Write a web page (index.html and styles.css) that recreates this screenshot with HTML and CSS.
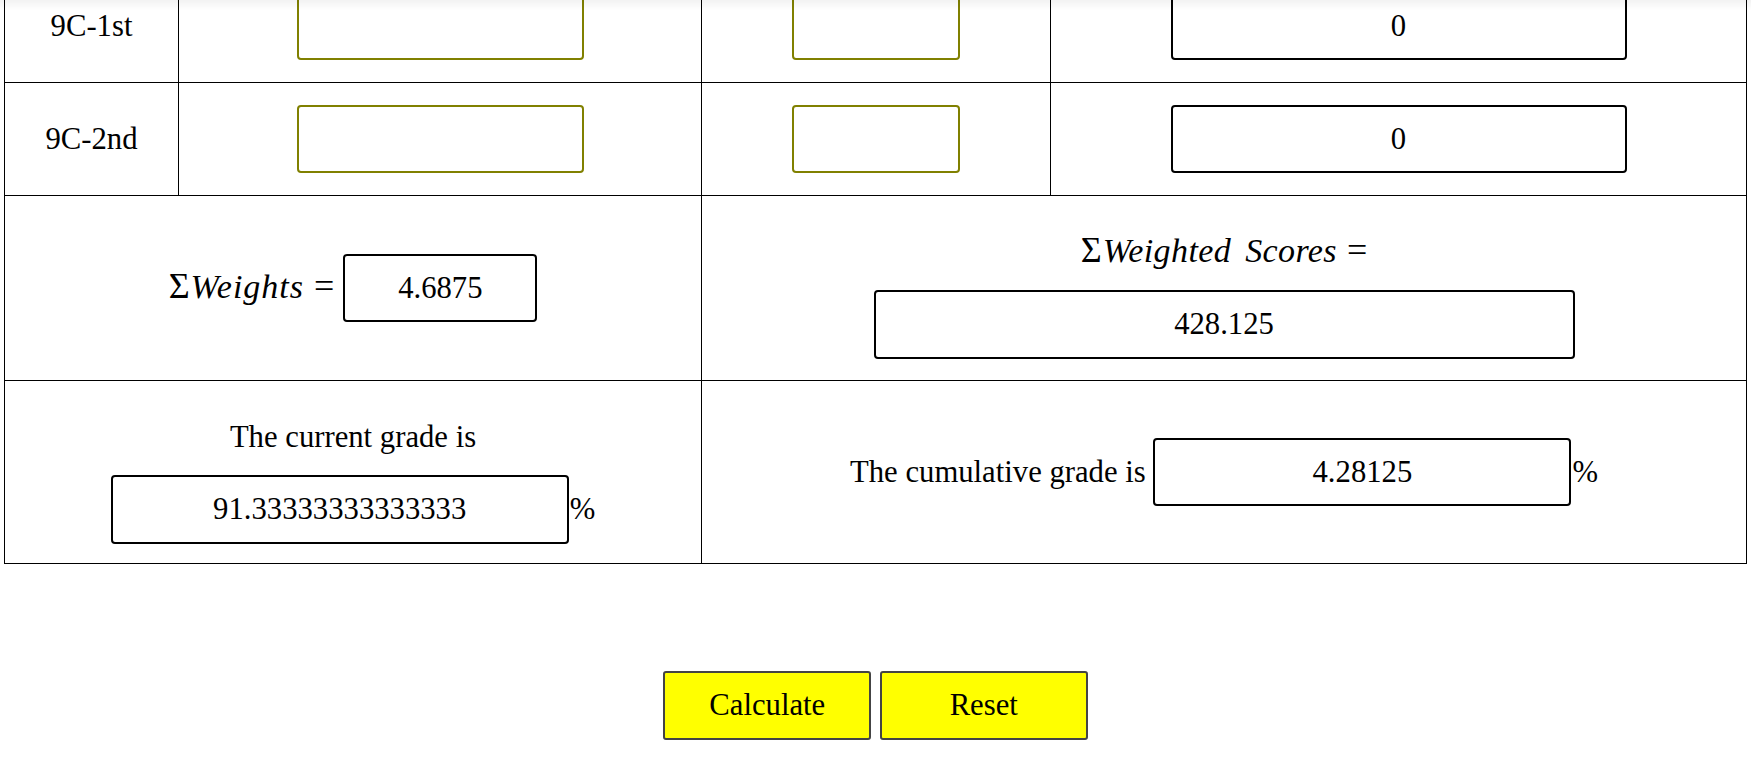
FILE: index.html
```html
<!DOCTYPE html>
<html lang="en">
<head>
<meta charset="utf-8">
<title>Grade Calculator</title>
<link rel="stylesheet" href="styles.css">
</head>
<body>
<div class="top-shade"></div>
<main class="page">
  <div class="grade-grid">
    <div class="cell">9C-1st</div>
    <div class="cell"><input class="field field-score" type="text"></div>
    <div class="cell"><input class="field field-weight" type="text"></div>
    <div class="cell"><input class="result result-row" type="text" value="0" readonly></div>

    <div class="cell">9C-2nd</div>
    <div class="cell"><input class="field field-score" type="text"></div>
    <div class="cell"><input class="field field-weight" type="text"></div>
    <div class="cell"><input class="result result-row" type="text" value="0" readonly></div>

    <div class="cell wide">
      <div class="inline-line"><span class="sym sigma">Σ</span><span class="var var-weights">Weights</span><span class="sym eq">=</span><input class="result result-weights" type="text" value="4.6875" readonly></div>
    </div>
    <div class="cell wide stacked stacked-scores">
      <div class="math-title"><span class="sym sigma">Σ</span><span class="var">Weighted</span><span class="var var-gap">Scores</span><span class="sym eq">=</span></div>
      <input class="result result-scores" type="text" value="428.125" readonly>
    </div>

    <div class="cell wide stacked stacked-current">
      <div class="text-line">The current grade is</div>
      <div class="field-line"><input class="result result-current" type="text" value="91.33333333333333" readonly><span class="pct">%</span></div>
    </div>
    <div class="cell wide">
      <div class="inline-line">The cumulative grade is <input class="result result-cumulative" type="text" value="4.28125" readonly><span class="pct">%</span></div>
    </div>
  </div>

  <div class="actions">
    <button class="btn" type="button">Calculate</button>
    <button class="btn" type="button">Reset</button>
  </div>
</main>
</body>
</html>
```

FILE: styles.css
```css
html, body {
  margin: 0;
  padding: 0;
  background: #ffffff;
}

body {
  font-family: "Liberation Serif", "Times New Roman", serif;
  font-size: 30.7px;
  color: #000;
}

.top-shade {
  position: fixed;
  top: 0;
  left: 0;
  right: 0;
  height: 10px;
  background: linear-gradient(to bottom, rgba(0, 0, 0, 0.05), rgba(0, 0, 0, 0));
  pointer-events: none;
  z-index: 5;
}

.page {
  display: block;
}

.grade-grid {
  display: grid;
  grid-template-columns: 174px 523px 349px 696px;
  grid-template-rows: 113px 113px 185px 183px;
  width: max-content;
  margin: -31px 0 0 4px;
  border-left: 1px solid #000;
  border-top: 1px solid #000;
}

.cell {
  box-sizing: border-box;
  border-right: 1px solid #000;
  border-bottom: 1px solid #000;
  display: flex;
  align-items: center;
  justify-content: center;
  text-align: center;
  line-height: 35px;
}

.wide {
  grid-column: span 2;
}

.stacked {
  flex-direction: column;
  justify-content: flex-start;
}

.stacked-current {
  padding-top: 39px;
}

.stacked-scores {
  padding-top: 34px;
}

input {
  font: inherit;
  font-family: "Liberation Serif", "Times New Roman", serif;
  font-size: 30.7px;
  color: #000;
  background: #fff;
  box-sizing: border-box;
  height: 68.5px;
  padding: 0 4px;
  margin: 0;
  border-radius: 4px;
  text-align: center;
  outline: none;
}

.field {
  border: 2px solid #808000;
}

.result {
  border: 2px solid #000;
}

.field-score { width: 287px; }
.field-weight { width: 168px; }
.result-row { width: 456px; }
.result-weights { width: 194px; }
.result-scores { width: 701px; margin-top: 18px; }
.result-current { width: 458px; }
.result-cumulative { width: 418px; }

.inline-line {
  line-height: 35px;
  white-space: nowrap;
}

.sym {
  font-family: "Liberation Serif", "Times New Roman", serif;
  font-size: 36px;
  font-style: normal;
}

.sigma {
  margin-right: 1px;
}

.var {
  font-family: "Liberation Serif", "Times New Roman", serif;
  font-size: 34px;
  font-style: italic;
  letter-spacing: 0.4px;
}

.var-weights {
  letter-spacing: 1px;
}

.var-gap {
  margin-left: 14px;
}

.eq {
  margin-left: 10px;
  margin-right: 9px;
}

.math-title {
  line-height: 40px;
  white-space: nowrap;
}

.math-title .eq {
  margin-right: 0;
}

.text-line {
  line-height: 35px;
}

.field-line {
  margin-top: 20px;
  line-height: 35px;
  white-space: nowrap;
}

.pct {
  margin-left: 1px;
}

.actions {
  display: flex;
  justify-content: center;
  gap: 8.5px;
  margin-top: 106.5px;
}

.btn {
  font-family: "Liberation Serif", "Times New Roman", serif;
  font-size: 30.7px;
  color: #000;
  width: 208px;
  height: 69px;
  margin: 0;
  padding: 0;
  background: #ffff00;
  border: 2px solid #444;
  border-radius: 3px;
  cursor: pointer;
}
```
